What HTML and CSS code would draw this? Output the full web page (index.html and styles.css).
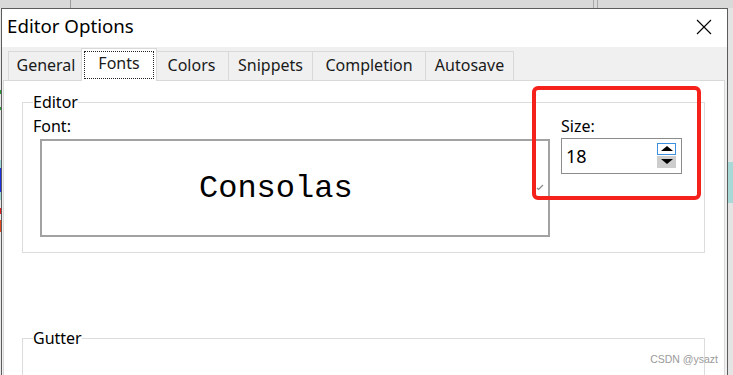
FILE: index.html
```html
<!DOCTYPE html>
<html lang="en">

<head>
    <meta charset="UTF-8">
    <meta name="viewport" content="width=device-width, initial-scale=1.0">
    <title>Editor Options</title>
    <link rel="stylesheet" href="styles.css">
</head>

<body>
    <div class="screen">
        <div class="backdrop-top"></div>

        <div class="desk-row">
            <div class="edge-left"></div>

            <div class="dialog">
                <div class="titlebar">
                    <span class="title">Editor Options</span>
                    <svg class="close" width="16" height="16" viewBox="0 0 16 16">
                        <path d="M1 1 L15 15 M15 1 L1 15" stroke="#000" stroke-width="1.1" fill="none" />
                    </svg>
                </div>

                <div class="tabstrip">
                    <div class="tab tab-general">General</div>
                    <div class="tab active"><span class="focus">Fonts</span></div>
                    <div class="tab tab-colors">Colors</div>
                    <div class="tab tab-snippets">Snippets</div>
                    <div class="tab tab-completion">Completion</div>
                    <div class="tab tab-autosave">Autosave</div>
                </div>

                <div class="panel">
                    <fieldset class="group">
                        <legend>Editor</legend>
                        <div class="editor-row">
                            <div class="font-col">
                                <label class="field-label">Font:</label>
                                <div class="font-box">
                                    <span class="preview">Consolas</span>
                                    <svg class="grip" width="8" height="6" viewBox="0 0 8 6">
                                        <path d="M1 4 L2.5 5.5 L7 1" stroke="#8a8a8a" stroke-width="1.2" fill="none" />
                                    </svg>
                                </div>
                            </div>
                            <div class="size-col">
                                <label class="field-label">Size:</label>
                                <div class="spin">
                                    <span class="spin-value">18</span>
                                    <div class="spin-btns">
                                        <span class="spin-btn up"></span>
                                        <span class="spin-btn down"></span>
                                    </div>
                                </div>
                            </div>
                        </div>
                    </fieldset>

                    <fieldset class="group gutter">
                        <legend>Gutter</legend>
                    </fieldset>
                </div>
            </div>

            <div class="edge-right"></div>
        </div>

        <!-- annotation drawn over the screenshot -->
        <div class="highlight"></div>
        <div class="watermark">CSDN @ysazt</div>
    </div>
</body>

</html>
```

FILE: styles.css
```css
/* General */
* {
    box-sizing: border-box;
}

body {
    margin: 0;
    background-color: #dcdcdc;
    font-family: "Noto Sans", "Liberation Sans", sans-serif;
    color: #000;
    overflow: hidden;
}

.screen {
    position: relative;
    width: 733px;
    height: 375px;
    overflow: hidden;
}

/* Windows behind the dialog */
.backdrop-top {
    height: 8px;
    background:
        linear-gradient(to right,
            #d9d9d9 0, #d9d9d9 70px, #9c9c9c 70px, #9c9c9c 71px,
            #d9d9d9 71px, #d9d9d9 593px, #a8a8a8 593px, #a8a8a8 594px,
            #d9d9d9 594px, #d9d9d9 597px, #a8a8a8 597px, #a8a8a8 598px,
            #d9d9d9 598px);
}

.desk-row {
    display: flex;
    height: 367px;
}

.edge-left {
    width: 1px;
    background: linear-gradient(to bottom,
        #e8e8e8 0, #e8e8e8 82px, #2e9a3a 82px, #2e9a3a 86px,
        #e8e8e8 86px, #e8e8e8 99px, #2e9a3a 99px, #2e9a3a 102px,
        #e8e8e8 102px, #e8e8e8 152px, #9ad8d8 152px, #9ad8d8 160px,
        #2030e0 160px, #2030e0 184px, #9ad8d8 184px, #9ad8d8 192px,
        #e8e8e8 192px, #e8e8e8 200px, #e02020 200px, #e02020 206px,
        #e8e8e8 206px, #e8e8e8 212px, #e04a20 212px, #e04a20 224px,
        #e8e8e8 224px);
}

.edge-right {
    flex: 1;
    background: linear-gradient(to bottom,
        #e4e4e4 0, #e4e4e4 154px, #a9d9d7 154px, #a9d9d7 195px,
        #e4e4e4 195px);
}

/* Dialog window */
.dialog {
    width: 727px;
    flex: none;
    display: flex;
    flex-direction: column;
    overflow: hidden;
    background-color: #f0f0f0;
    border: 1px solid #5c5c5c;
    border-bottom: none;
}

.titlebar {
    flex: none;
    display: flex;
    align-items: flex-start;
    height: 38px;
    padding: 5px 15px 0 5px;
    background-color: #fff;
}

.title {
    font-size: 18.7px;
    line-height: 24px;
}

.close {
    margin-left: auto;
    margin-top: 5px;
}

/* Tabs */
.tabstrip {
    flex: none;
    display: flex;
    align-items: flex-end;
    height: 33px;
    padding-left: 6px;
}

.tab {
    position: relative;
    flex: none;
    height: 29px;
    padding: 0;
    border: 1px solid #d9d9d9;
    border-bottom: none;
    background-color: #f0f0f0;
    font-size: 16px;
    line-height: 27px;
    text-align: center;
    color: #1a1a1a;
}

.tab + .tab {
    margin-left: -1px;
}

.tab-general { width: 76px; }
.tab-colors { width: 75px; }
.tab-snippets { width: 85px; }
.tab-completion { width: 114px; }
.tab-autosave { width: 89px; }

.tab.active {
    z-index: 2;
    width: 76px;
    height: 33px;
    margin: 0 -2px -1px -3px;
    padding: 2px;
    background-color: #fff;
}

.focus {
    display: block;
    height: 28px;
    border: 1px dotted #222;
    line-height: 22px;
}

/* Tab page */
.panel {
    position: relative;
    flex: 1;
    min-height: 0;
    margin: 0 2px 0 1px;
    padding: 11px 19px 0 18px;
    background-color: #fff;
    border: 1px solid #d9d9d9;
    border-bottom: none;
}

.group {
    margin: 0;
    padding: 0 10px 15px 10px;
    border: 1px solid #dcdcdc;
}

.group legend {
    padding: 0;
    font-size: 16px;
    line-height: 20px;
}

.gutter {
    margin-top: 75px;
    height: 60px;
}

.editor-row {
    display: flex;
}

.field-label {
    display: block;
    margin-top: 4px;
    font-size: 16px;
    line-height: 20px;
}

.font-col {
    flex: none;
    width: 517px;
}

.font-box {
    display: flex;
    align-items: center;
    width: 510px;
    height: 98px;
    margin: 3px 0 0 7px;
    padding-left: 157px;
    border: 2px solid #a2a2a2;
}

.preview {
    font-family: "Liberation Mono", "DejaVu Sans Mono", monospace;
    font-size: 32px;
}

.grip {
    margin-left: auto;
    margin-right: 4px;
    margin-top: -2px;
}

.size-col {
    flex: none;
    margin-left: 11px;
}

.spin {
    display: flex;
    align-items: center;
    width: 121px;
    height: 36px;
    margin-top: 2px;
    padding: 0 5px 0 4px;
    border: 1px solid #8c8c8c;
}

.spin-value {
    font-size: 18px;
}

.spin-btns {
    display: flex;
    flex-direction: column;
    gap: 1px;
    margin-left: auto;
    margin-top: -2px;
}

.spin-btn {
    display: flex;
    align-items: center;
    justify-content: center;
    width: 19px;
    height: 12px;
}

.spin-btn.up {
    border: 1px solid #3c8ee0;
    background-color: #fff;
}

.spin-btn.down {
    background-color: #cdcdcd;
}

.spin-btn::before {
    content: "";
    border-left: 6px solid transparent;
    border-right: 6px solid transparent;
}

.spin-btn.up::before {
    border-bottom: 5px solid #000;
}

.spin-btn.down::before {
    border-top: 5px solid #000;
}

/* Annotation */
.highlight {
    position: absolute;
    left: 532px;
    top: 86px;
    width: 169px;
    height: 114px;
    border: 4px solid #f5211b;
    border-radius: 6px;
}

.watermark {
    position: absolute;
    right: 15px;
    top: 353px;
    font-family: "Liberation Sans", sans-serif;
    font-size: 10.5px;
    color: #9a9a9a;
}
```
